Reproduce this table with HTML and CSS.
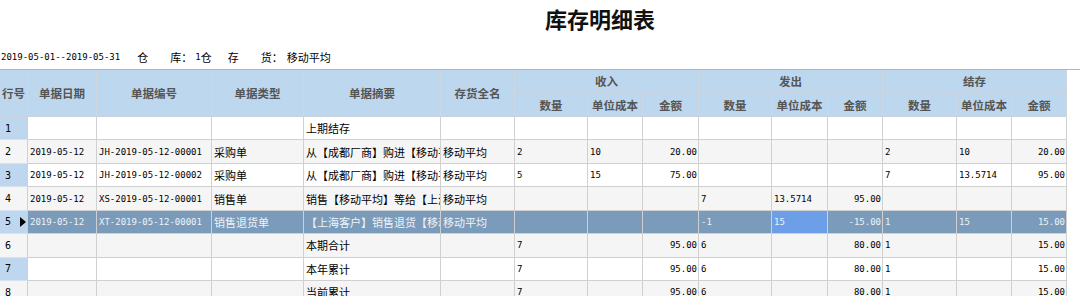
FILE: index.html
```html
<!DOCTYPE html>
<html lang="zh-CN">
<head>
<meta charset="utf-8">
<title>库存明细表</title>
<link rel="stylesheet" href="styles.css">
</head>
<body>
<div class="title">库存明细表</div>
<div class="info">
  <span class="m d">2019-05-01--2019-05-31</span>
  <span class="i1">仓</span>
  <span class="i2">库</span><span>：</span><span class="m i3">1</span><span>仓</span>
  <span class="i4">存</span>
  <span class="i5">货</span><span>：</span><span class="i6">移动平均</span>
</div>
<div class="grid-wrap">
<table class="grid">
  <colgroup>
    <col style="width:28px"><col style="width:69px"><col style="width:115px"><col style="width:92px"><col style="width:137px"><col style="width:74px">
    <col style="width:73px"><col style="width:55px"><col style="width:56px">
    <col style="width:73px"><col style="width:56px"><col style="width:55px">
    <col style="width:74px"><col style="width:55px"><col style="width:55px">
  </colgroup>
  <thead>
    <tr class="h1">
      <th rowspan="2">行号</th><th rowspan="2">单据日期</th><th rowspan="2">单据编号</th><th rowspan="2">单据类型</th><th rowspan="2">单据摘要</th><th rowspan="2">存货全名</th>
      <th colspan="3">收入</th><th colspan="3">发出</th><th colspan="3">结存</th>
    </tr>
    <tr class="h2">
      <th>数量</th><th>单位成本</th><th>金额</th>
      <th>数量</th><th>单位成本</th><th>金额</th>
      <th>数量</th><th>单位成本</th><th>金额</th>
    </tr>
  </thead>
  <tbody>
    <tr>
      <td class="rn"><div class="rnc"><span>1</span></div></td><td></td><td></td><td></td><td>上期结存</td><td></td>
      <td></td><td></td><td></td><td></td><td></td><td></td><td></td><td></td><td></td>
    </tr>
    <tr class="alt">
      <td class="rn"><div class="rnc"><span>2</span></div></td><td class="m">2019-05-12</td><td class="m">JH-2019-05-12-00001</td><td>采购单</td><td>从【成都厂商】购进【移动平均</td><td>移动平均</td>
      <td class="m">2</td><td class="m">10</td><td class="m r">20.00</td><td></td><td></td><td></td><td class="m">2</td><td class="m">10</td><td class="m r">20.00</td>
    </tr>
    <tr>
      <td class="rn"><div class="rnc"><span>3</span></div></td><td class="m">2019-05-12</td><td class="m">JH-2019-05-12-00002</td><td>采购单</td><td>从【成都厂商】购进【移动平均</td><td>移动平均</td>
      <td class="m">5</td><td class="m">15</td><td class="m r">75.00</td><td></td><td></td><td></td><td class="m">7</td><td class="m">13.5714</td><td class="m r">95.00</td>
    </tr>
    <tr class="alt">
      <td class="rn"><div class="rnc"><span>4</span></div></td><td class="m">2019-05-12</td><td class="m">XS-2019-05-12-00001</td><td>销售单</td><td>销售【移动平均】等给【上海客户】</td><td>移动平均</td>
      <td></td><td></td><td></td><td class="m">7</td><td class="m">13.5714</td><td class="m r">95.00</td><td></td><td></td><td></td>
    </tr>
    <tr class="sel">
      <td class="rn"><div class="rnc"><span>5</span><svg class="arrow" width="6" height="10" viewBox="0 0 6 10"><polygon points="0,0 6,5 0,10" fill="#000"/></svg></div></td><td class="m">2019-05-12</td><td class="m">XT-2019-05-12-00001</td><td>销售退货单</td><td>【上海客户】销售退货【移动平均</td><td>移动平均</td>
      <td></td><td></td><td></td><td class="m">-1</td><td class="m cur">15</td><td class="m r">-15.00</td><td class="m">1</td><td class="m">15</td><td class="m r">15.00</td>
    </tr>
    <tr class="alt">
      <td class="rn"><div class="rnc"><span>6</span></div></td><td></td><td></td><td></td><td>本期合计</td><td></td>
      <td class="m">7</td><td></td><td class="m r">95.00</td><td class="m">6</td><td></td><td class="m r">80.00</td><td class="m">1</td><td></td><td class="m r">15.00</td>
    </tr>
    <tr>
      <td class="rn"><div class="rnc"><span>7</span></div></td><td></td><td></td><td></td><td>本年累计</td><td></td>
      <td class="m">7</td><td></td><td class="m r">95.00</td><td class="m">6</td><td></td><td class="m r">80.00</td><td class="m">1</td><td></td><td class="m r">15.00</td>
    </tr>
    <tr class="alt">
      <td class="rn"><div class="rnc"><span>8</span></div></td><td></td><td></td><td></td><td>当前累计</td><td></td>
      <td class="m">7</td><td></td><td class="m r">95.00</td><td class="m">6</td><td></td><td class="m r">80.00</td><td class="m">1</td><td></td><td class="m r">15.00</td>
    </tr>
  </tbody>
</table>
</div>
</body>
</html>
```

FILE: styles.css
```css
html, body {
  margin: 0;
  padding: 0;
  background: #ffffff;
}
body {
  font-family: "Noto Sans CJK SC", sans-serif;
  font-size: 11px;
  color: #000;
  overflow: hidden;
}
.title {
  height: 38px;
  line-height: 36px;
  padding-left: 120px;
  text-align: center;
  font-size: 22px;
  font-weight: bold;
  color: #111;
}
.info {
  height: 31px;
  box-sizing: border-box;
  padding-top: 7px;
  display: flex;
  align-items: center;
  white-space: nowrap;
}
.info .d { margin-left: 1px; }
.info .i1 { margin-left: 17px; }
.info .i2 { margin-left: 22px; }
.info .i3 { margin-left: 3px; }
.info .i4 { margin-left: 16px; }
.info .i5 { margin-left: 22px; }
.info .i6 { margin-left: 4px; }
.m {
  font-family: "DejaVu Sans Mono", monospace;
  font-size: 9px;
}
.grid-wrap {
  border-top: 1px solid #a7b7c7;
}
.grid {
  border-collapse: separate;
  border-spacing: 0;
  table-layout: fixed;
  width: 1067px;
}
.grid th, .grid td {
  border-right: 1px solid #d0d0d0;
  border-bottom: 1px solid #d0d0d0;
  padding: 0;
  overflow: hidden;
  white-space: nowrap;
  box-sizing: border-box;
}
.grid thead th {
  background: #bdd7ee;
  color: #555;
  font-weight: bold;
  font-size: 11.5px;
  text-align: center;
  border-right-color: #cfd6dd;
  border-bottom-color: #c9d2dc;
}
.grid tr.h1 { height: 23px; }
.grid tr.h2 { height: 24px; }
.grid tbody tr { height: 23.45px; }
.grid tbody td {
  padding: 0 2px;
  background: #ffffff;
}
.grid tbody tr.alt td { background: #f5f5f5; }
.grid tbody td.r { text-align: right; padding-right: 1px; }
.grid tbody td.rn {
  background: #bfd7ee;
  padding: 0 1px 0 5px;
  font-family: "DejaVu Sans Mono", monospace;
  font-size: 10px;
  border-bottom-color: #d6e2ee;
}
.rnc {
  display: flex;
  align-items: center;
  justify-content: space-between;
}
.arrow { display: block; }
.grid tbody tr.sel td {
  background: #7b9bba;
  color: #eef3f8;
}
.grid tbody tr.sel td.rn {
  background: #bfd7ee;
  color: #000;
}
.grid tbody tr.sel td.cur {
  background: #6c9fe8;
}
```
